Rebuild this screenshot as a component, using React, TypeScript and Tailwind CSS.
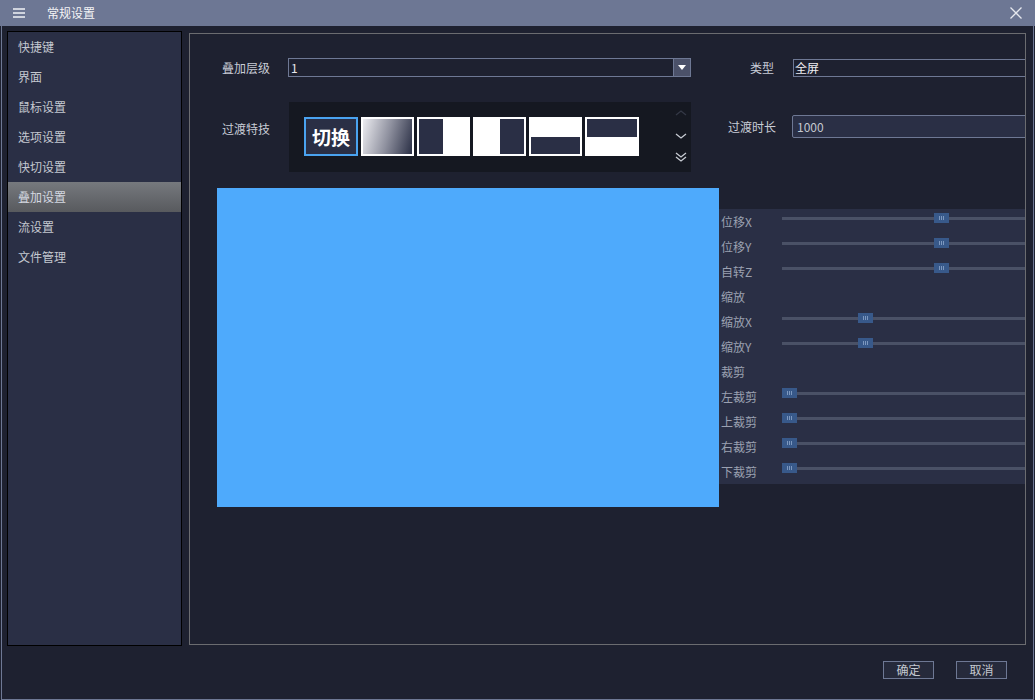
const FONT = { fontFamily: '"Noto Sans CJK SC", "Noto Sans", sans-serif' };

const navItems = ["快捷键", "界面", "鼠标设置", "选项设置", "快切设置", "叠加设置", "流设置", "文件管理"];

const sliders: { label: string; value?: number }[] = [
  { label: "位移X", value: 152 },
  { label: "位移Y", value: 152 },
  { label: "自转Z", value: 152 },
  { label: "缩放" },
  { label: "缩放X", value: 76 },
  { label: "缩放Y", value: 76 },
  { label: "裁剪" },
  { label: "左裁剪", value: 0 },
  { label: "上裁剪", value: 0 },
  { label: "右裁剪", value: 0 },
  { label: "下裁剪", value: 0 },
];

const Thumb = ({ left }: { left: number }) => (
  <div
    className="absolute top-[-4px] w-[15px] h-[10px] bg-[#38598a] flex items-center justify-center gap-[1px]"
    style={{ left }}
  >
    <span className="w-px h-[4px] bg-[#7d98bf]" />
    <span className="w-px h-[4px] bg-[#7d98bf]" />
    <span className="w-px h-[4px] bg-[#7d98bf]" />
  </div>
);

const SliderRow = ({ label, value }: { label: string; value?: number }) => (
  <div className="flex items-center h-[25px] shrink-0">
    <span className="w-[63px] shrink-0 pl-[2px] text-[12px] text-[#9ba1b1] leading-none whitespace-nowrap">
      {label}
    </span>
    {value !== undefined && (
      <div className="relative flex-1 h-[3px] bg-[#4a5166] -translate-y-[3px]">
        <Thumb left={value} />
      </div>
    )}
  </div>
);

const ChevronUp = ({ color }: { color: string }) => (
  <svg width="12" height="6" viewBox="0 0 12 6" fill="none" className="block">
    <polyline points="1,5 6,1 11,5" stroke={color} strokeWidth="1.3" />
  </svg>
);

const ChevronDown = ({ color }: { color: string }) => (
  <svg width="12" height="6" viewBox="0 0 12 6" fill="none" className="block">
    <polyline points="1,1 6,5 11,1" stroke={color} strokeWidth="1.3" />
  </svg>
);

const ChevronDouble = ({ color }: { color: string }) => (
  <svg width="12" height="10" viewBox="0 0 12 10" fill="none" className="block">
    <polyline points="1,1 6,5 11,1" stroke={color} strokeWidth="1.3" />
    <polyline points="1,5 6,9 11,5" stroke={color} strokeWidth="1.3" />
  </svg>
);

export default function App() {
  return (
    <div className="w-[1035px] h-[700px] bg-[#1e2130] flex flex-col overflow-hidden" style={FONT}>
      {/* Title bar */}
      <div className="h-[26px] shrink-0 bg-[#6d7794] flex items-center">
        <div className="ml-[13px] w-[12px] shrink-0 flex flex-col gap-[2px]">
          <span className="h-[2px] bg-[#d0d4de]" />
          <span className="h-[2px] bg-[#d0d4de]" />
          <span className="h-[2px] bg-[#d0d4de]" />
        </div>
        <span className="ml-[22px] text-[12px] text-[#f4f4f6] leading-none">常规设置</span>
        <svg className="ml-auto mr-[13px]" width="12" height="12" viewBox="0 0 12 12">
          <path d="M0.5 0.5 L11.5 11.5 M11.5 0.5 L0.5 11.5" stroke="#e6e8ee" strokeWidth="1.3" />
        </svg>
      </div>

      {/* Body */}
      <div className="ml-px w-[1033px] flex-1 border-x border-b border-[#6e7894] flex flex-col">
        <div className="flex pl-[5px] pt-[5px]">
          {/* Sidebar */}
          <div className="w-[175px] h-[615px] shrink-0 bg-[#2a2f45] border border-black">
            {navItems.map((item) => (
              <div
                key={item}
                className={
                  item === "叠加设置"
                    ? "h-[30px] flex items-center pl-[10px] text-[12px] text-[#d4d8e0] bg-linear-to-b from-[#76797e] to-[#585a5e]"
                    : "h-[30px] flex items-center pl-[10px] text-[12px] text-[#c4c8d0]"
                }
              >
                {item}
              </div>
            ))}
          </div>

          {/* Content panel */}
          <div className="ml-[7px] mt-[2px] w-[837px] h-[612px] shrink-0 border border-[#6b6c70] overflow-hidden">
            {/* Row 1 */}
            <div className="flex items-center h-[19px] mt-[24px]">
              <span className="ml-[32px] w-[66px] shrink-0 whitespace-nowrap text-[12px] text-[#c8ccd6]">叠加层级</span>
              <div className="w-[403px] h-[19px] shrink-0 border border-[#6e7894] flex">
                <span className="flex-1 pl-[2px] text-[12px] leading-[17px] text-[#e8e8ec]">1</span>
                <div className="w-[17px] h-full bg-[#4b5169] border-l border-[#6e7894] flex items-center justify-center">
                  <svg width="8" height="5" viewBox="0 0 8 5">
                    <polygon points="0,0 8,0 4,5" fill="#ffffff" />
                  </svg>
                </div>
              </div>
              <span className="w-[102px] shrink-0 pr-[19px] text-right whitespace-nowrap text-[12px] text-[#c8ccd6]">类型</span>
              <div className="w-[300px] h-[18px] shrink-0 border border-[#6e7894] pl-[1px] text-[12px] leading-[16px] text-[#eeeef2]">
                全屏
              </div>
            </div>

            {/* Row 2 */}
            <div className="flex items-start mt-[25px]">
              <span className="ml-[32px] w-[67px] shrink-0 whitespace-nowrap pt-[19px] text-[12px] text-[#c8ccd6] leading-[16px]">
                过渡特技
              </span>
              <div className="w-[402px] h-[70px] shrink-0 bg-[#151821] flex pl-[15px] pt-[15px]">
                <div className="flex gap-[3px] h-[39px] shrink-0">
                  <div className="w-[54px] h-[39px] shrink-0 border-2 border-[#4aa3f0] bg-[#2a2f45] flex items-center justify-center text-[19px] font-bold text-white leading-none whitespace-nowrap">
                    切换
                  </div>
                  <div className="w-[53px] h-[39px] shrink-0 border-2 border-white bg-[linear-gradient(105deg,#ececf0,#9092a0_50%,#2a2f45)]" />
                  <div className="w-[53px] h-[39px] shrink-0 p-[2px] bg-white flex">
                    <div className="w-[24px] h-full bg-[#2a2f45]" />
                  </div>
                  <div className="w-[53px] h-[39px] shrink-0 p-[2px] bg-white flex justify-end">
                    <div className="w-[24px] h-full bg-[#2a2f45]" />
                  </div>
                  <div className="w-[53px] h-[39px] shrink-0 p-[2px] bg-white flex flex-col justify-end">
                    <div className="h-[17px] bg-[#2a2f45]" />
                  </div>
                  <div className="w-[54px] h-[39px] shrink-0 p-[2px] bg-white flex flex-col">
                    <div className="h-[18px] bg-[#2a2f45]" />
                  </div>
                </div>
                <div className="ml-auto mr-[4px] -mt-[7px] flex flex-col w-[12px] shrink-0">
                  <ChevronUp color="#343846" />
                  <div className="mt-[17px]">
                    <ChevronDown color="#c8ccd4" />
                  </div>
                  <div className="mt-[13px]">
                    <ChevronDouble color="#c8ccd4" />
                  </div>
                </div>
              </div>
              <div className="flex items-center mt-[13px] h-[23px] shrink-0">
                <span className="w-[101px] shrink-0 pr-[16px] text-right whitespace-nowrap text-[12px] text-[#c8ccd6]">过渡时长</span>
                <div className="w-[300px] h-[23px] shrink-0 bg-[#2a2f45] border border-[#6e7894] rounded-[2px] pl-[4px] text-[12px] leading-[21px] text-[#c4c8d0]">
                  1000
                </div>
              </div>
            </div>

            {/* Preview row */}
            <div className="flex items-start mt-[16px]">
              <div className="ml-[27px] w-[502px] h-[319px] shrink-0 bg-[#4eaafc]" />
              <div className="mt-[21px] w-[320px] h-[275px] shrink-0 bg-[#2a2f45] flex flex-col">
                {sliders.map((s) => (
                  <SliderRow key={s.label} label={s.label} value={s.value} />
                ))}
              </div>
            </div>
          </div>
        </div>

        {/* Footer buttons */}
        <div className="flex justify-end gap-[22px] mt-[15px] mr-[26px]">
          <button className="w-[51px] h-[18px] bg-[#262a3b] border border-[#6e7894] text-[12px] leading-[16px] text-[#c4c8d0]">
            确定
          </button>
          <button className="w-[51px] h-[18px] bg-[#262a3b] border border-[#6e7894] text-[12px] leading-[16px] text-[#c4c8d0]">
            取消
          </button>
        </div>
      </div>
    </div>
  );
}
